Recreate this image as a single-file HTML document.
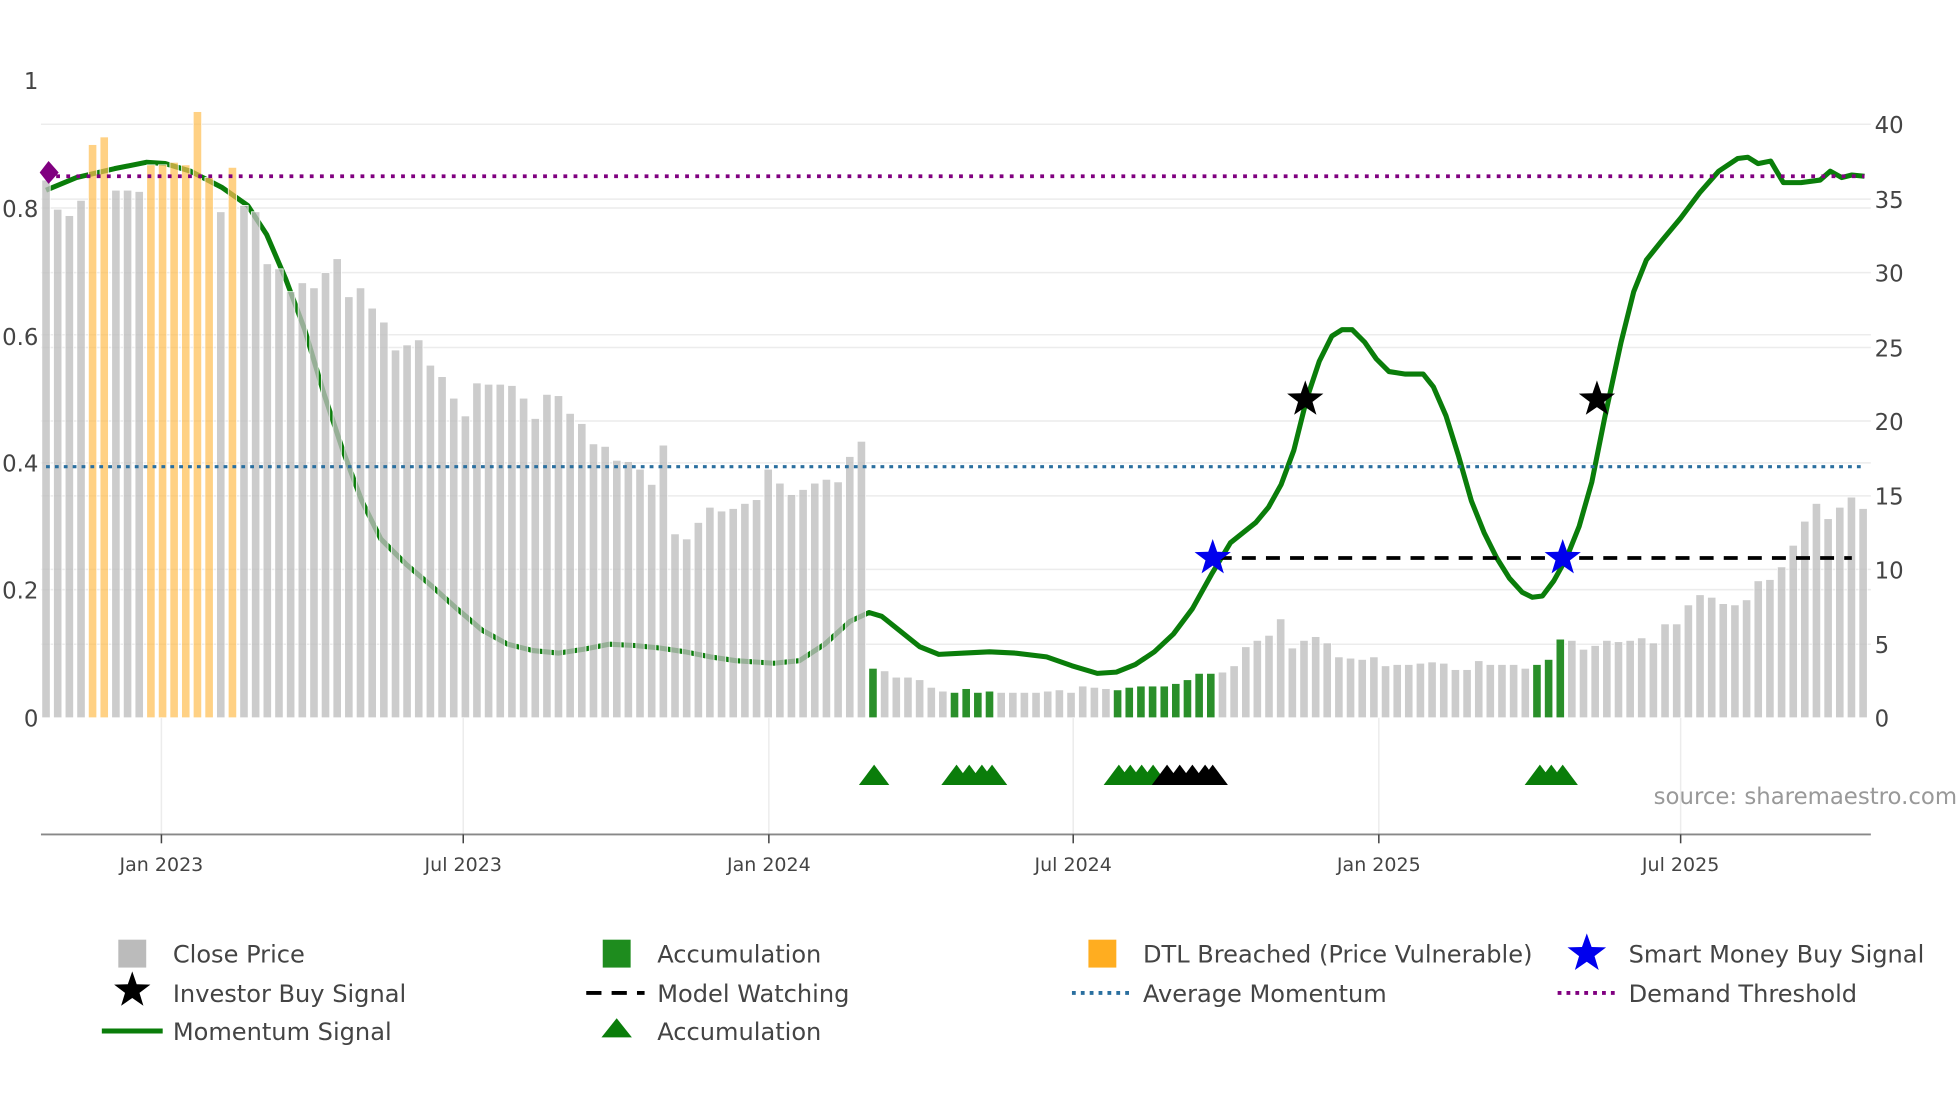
<!DOCTYPE html>
<html><head><meta charset="utf-8"><style>
html,body{margin:0;padding:0;background:#fff;width:1960px;height:1102px;overflow:hidden}
svg{display:block}
text{font-family:"DejaVu Sans","Liberation Sans",sans-serif;fill:#444}
</style></head><body>
<svg id="s" width="1960" height="1102" viewBox="0 0 1545 869" xmlns="http://www.w3.org/2000/svg">
<g stroke="#ececec" stroke-width="1.2">
<line x1="32" x2="1475" y1="98" y2="98"/><line x1="32" x2="1475" y1="157" y2="157"/>
<line x1="32" x2="1475" y1="164" y2="164"/><line x1="32" x2="1475" y1="215" y2="215"/>
<line x1="32" x2="1475" y1="264" y2="264"/><line x1="32" x2="1475" y1="274" y2="274"/>
<line x1="32" x2="1475" y1="332" y2="332"/><line x1="32" x2="1475" y1="365" y2="365"/>
<line x1="32" x2="1475" y1="391" y2="391"/><line x1="32" x2="1475" y1="449" y2="449"/>
<line x1="32" x2="1475" y1="465" y2="465"/><line x1="32" x2="1475" y1="508" y2="508"/>
<line x1="127" x2="127" y1="566" y2="658"/><line x1="365" x2="365" y1="566" y2="658"/>
<line x1="606" x2="606" y1="566" y2="658"/><line x1="846" x2="846" y1="566" y2="658"/>
<line x1="1087" x2="1087" y1="566" y2="658"/><line x1="1325" x2="1325" y1="566" y2="658"/>
</g>
<path id="mom" fill="none" stroke="#0a7d0a" stroke-width="4" stroke-linejoin="round"/>
<g id="bars"></g>
<line x1="36" x2="1470" y1="139" y2="139" stroke="#800080" stroke-width="3" stroke-dasharray="3,5"/>
<line x1="36" x2="1470" y1="368" y2="368" stroke="#2a6f9f" stroke-width="2.5" stroke-dasharray="3,4"/>
<line x1="960" x2="1460" y1="440" y2="440" stroke="#000" stroke-width="3" stroke-dasharray="11,8"/>
<path d="M38 127 L46 136 L38 145 L31 136Z" fill="#800080"/>
<g id="stars"></g>
<g id="tris"></g>
<line x1="32" x2="1475" y1="658" y2="658" stroke="#888" stroke-width="1.5"/>
<g stroke="#444" stroke-width="1.2">
<line x1="127" x2="127" y1="658" y2="665"/><line x1="365" x2="365" y1="658" y2="665"/>
<line x1="606" x2="606" y1="658" y2="665"/><line x1="846" x2="846" y1="658" y2="665"/>
<line x1="1087" x2="1087" y1="658" y2="665"/><line x1="1325" x2="1325" y1="658" y2="665"/>
</g>
<g font-size="15" text-anchor="middle">
<text x="127" y="687">Jan 2023</text><text x="365" y="687">Jul 2023</text>
<text x="606" y="687">Jan 2024</text><text x="846" y="687">Jul 2024</text>
<text x="1087" y="687">Jan 2025</text><text x="1325" y="687">Jul 2025</text>
</g>
<g font-size="18" text-anchor="end">
<text x="30" y="70">1</text><text x="30" y="171">0.8</text><text x="30" y="272">0.6</text>
<text x="30" y="372">0.4</text><text x="30" y="472">0.2</text><text x="30" y="573">0</text>
</g>
<g font-size="18">
<text x="1478" y="105">40</text><text x="1478" y="164">35</text><text x="1478" y="222">30</text>
<text x="1478" y="281">25</text><text x="1478" y="339">20</text><text x="1478" y="398">15</text>
<text x="1478" y="456">10</text><text x="1478" y="515">5</text><text x="1478" y="573">0</text>
</g>
<text x="1543" y="634" font-size="18" text-anchor="end" style="fill:#999">source: sharemaestro.com</text>
<g font-size="19">
<rect x="93" y="741" width="22" height="22" fill="#bbb"/><text x="136" y="759">Close Price</text>
<text x="136" y="790">Investor Buy Signal</text>
<line x1="80" x2="128" y1="813" y2="813" stroke="#0a7d0a" stroke-width="4"/><text x="136" y="820">Momentum Signal</text>
<rect x="475" y="741" width="22" height="22" fill="#1e8c1e"/><text x="518" y="759">Accumulation</text>
<line x1="462" x2="508" y1="783" y2="783" stroke="#000" stroke-width="3" stroke-dasharray="12,8"/><text x="518" y="790">Model Watching</text>
<path d="M486 803 L498 818 L474 818Z" fill="#0a7d0a"/><text x="518" y="820">Accumulation</text>
<rect x="858" y="741" width="22" height="22" fill="#ffad20"/><text x="901" y="759">DTL Breached (Price Vulnerable)</text>
<line x1="845" x2="891" y1="783" y2="783" stroke="#2a6f9f" stroke-width="3" stroke-dasharray="3,4"/><text x="901" y="790">Average Momentum</text>
<text x="1284" y="759">Smart Money Buy Signal</text>
<line x1="1228" x2="1274" y1="783" y2="783" stroke="#800080" stroke-width="3" stroke-dasharray="3,4"/><text x="1284" y="790">Demand Threshold</text>
</g>
</svg>
<script>
var NS="http://www.w3.org/2000/svg";
var tops=[142,165,170,158,114,108,150,150,151,130,130,128,130,88,140,167,132,162,167,208,212,230,223,227,215,204,234,227,243,254,276,272,268,288,297,314,328,302,303,303,304,314,330,311,312,326,334,350,352,363,364,370,382,351,421,425,412,400,403,401,397,394,370,381,390,386,381,378,380,360,348,527,529,534,534,536,542,545,546,543,546,545,546,546,546,546,545,544,546,541,542,543,544,542,541,541,541,539,536,531,531,530,525,510,505,501,488,511,505,502,507,518,519,520,518,525,524,524,523,522,523,528,528,521,524,524,524,527,524,520,504,505,512,509,505,506,505,503,507,492,492,477,469,471,476,477,473,458,457,447,430,411,397,409,400,392,401];
var orange=[4,5,9,10,11,12,13,14,16],green=[71,78,79,80,81,92,93,94,95,96,97,98,99,100,128,129,130];
var g=document.getElementById('bars'),h='';
for(var i=0;i<tops.length;i++){var x=36+i*9.185,c='rgba(190,190,190,0.78)';
if(orange.indexOf(i)>=0)c='rgba(255,190,80,0.7)';if(green.indexOf(i)>=0)c='#2a8f2a';
h+='<rect x="'+(x-3.3).toFixed(1)+'" y="'+tops[i]+'" width="6.6" height="'+(566-tops[i])+'" fill="'+c+'" stroke="#fff" stroke-width="0.6"/>';}
g.innerHTML=h;
var p=[[36,150],[60,140],[90,133],[115,128],[130,129],[150,135],[175,148],[195,162],[210,185],[225,220],[240,260],[255,310],[270,355],[285,395],[300,425],[320,445],[340,462],[360,480],[380,497],[400,508],[420,513],[440,515],[460,512],[480,508],[500,509],[520,511],[540,514],[560,518],[580,521],[610,523],[630,521],[650,508],[670,490],[685,483],[695,486],[710,498],[725,510],[740,516],[760,515],[780,514],[800,515],[825,518],[845,525],[865,531],[880,530],[895,524],[910,514],[925,500],[940,480],[955,453],[970,428],[990,412],[1000,400],[1010,382],[1020,355],[1030,315],[1040,285],[1050,265],[1058,260],[1066,260],[1076,270],[1085,283],[1095,293],[1108,295],[1122,295],[1130,305],[1140,328],[1150,360],[1160,395],[1170,420],[1180,440],[1190,456],[1200,467],[1208,471],[1216,470],[1225,458],[1235,440],[1245,415],[1255,380],[1265,330],[1278,270],[1288,230],[1298,205],[1310,190],[1325,172],[1340,152],[1355,135],[1370,125],[1378,124],[1386,129],[1396,127],[1406,144],[1420,144],[1435,142],[1443,135],[1452,140],[1460,138],[1470,139]];
document.getElementById('mom').setAttribute('d','M'+p.map(function(a){return a[0]+' '+a[1]}).join(' L'));
function star(cx,cy,r,c){var s='';for(var k=0;k<10;k++){var a=-Math.PI/2+k*Math.PI/5,rr=k%2?r*0.4:r;s+=(k?'L':'M')+(cx+rr*Math.cos(a)).toFixed(1)+' '+(cy+rr*Math.sin(a)).toFixed(1);}return '<path d="'+s+'Z" fill="'+c+'"/>';}
document.getElementById('stars').innerHTML=star(956,440,15,'#0000ee')+star(1232,440,15,'#0000ee')+star(1029,315,15,'#000')+star(1259,315,15,'#000')+star(104,781,15,'#000')+star(1251,752,16,'#0000ee');
var t='',tr=[[689,'#0a7d0a'],[754,'#0a7d0a'],[764,'#0a7d0a'],[774,'#0a7d0a'],[782,'#0a7d0a'],[882,'#0a7d0a'],[891,'#0a7d0a'],[900,'#0a7d0a'],[909,'#0a7d0a'],[920,'#000'],[930,'#000'],[940,'#000'],[950,'#000'],[956,'#000'],[1214,'#0a7d0a'],[1223,'#0a7d0a'],[1232,'#0a7d0a']];
tr.forEach(function(a){t+='<path d="M'+a[0]+' 603 L'+(a[0]+12)+' 619 L'+(a[0]-12)+' 619Z" fill="'+a[1]+'"/>';});
document.getElementById('tris').innerHTML=t;
</script>
</body></html>
